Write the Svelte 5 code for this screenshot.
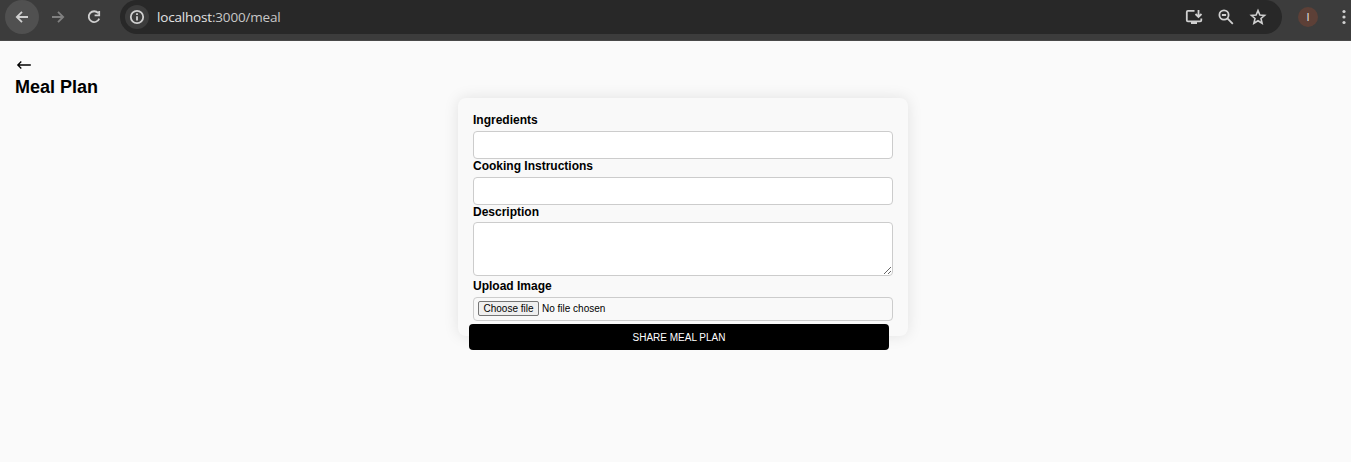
<script>
  let ingredients = $state('');
  let instructions = $state('');
  let description = $state('');
</script>

<div class="window">
  <header class="toolbar">
    <button class="nav active" aria-label="Back">
      <svg width="34" height="34" viewBox="0 0 34 34"><path d="M23 17H12M17 11.8L11.8 17L17 22.2" /></svg>
    </button>
    <button class="nav forward" aria-label="Forward">
      <svg width="34" height="34" viewBox="0 0 34 34"><path d="M11 17H22M17 11.8L22.2 17L17 22.2" /></svg>
    </button>
    <button class="nav reload" aria-label="Reload">
      <svg width="34" height="34" viewBox="0 0 34 34"><path d="M21.3 13.2A5.4 5.4 0 1 0 22.2 18.6M22.2 11V15.4H17.6" /></svg>
    </button>
    <div class="address">
      <span class="info">
        <svg width="24" height="24" viewBox="0 0 24 24"><circle cx="12" cy="12" r="6.2" /><path d="M12 11.3V15.6M12 8.2V10" /></svg>
      </span>
      <span class="url"><b>localhost</b>:3000/meal</span>
      <div class="actions">
        <svg width="20" height="20" viewBox="0 0 20 20"><path d="M10.5 3.8H3.9Q2.8 3.8 2.8 4.9V13.3Q2.8 14.4 3.9 14.4H16.2Q17.3 14.4 17.3 13.3V11.5M14.5 3V9.5M11.5 7L14.5 10L17.5 7" /><path class="solid" d="M7 14.5h6v2.5H7z" /></svg>
        <svg width="20" height="20" viewBox="0 0 20 20"><circle cx="8" cy="8" r="4.6" /><path d="M11.4 11.4L16.8 16.8M5.9 8H10.1" /></svg>
        <svg width="20" height="20" viewBox="0 0 20 20"><path class="star" d="M10 3.6L11.9 8L16.6 8.4L13 11.5L14.1 16.2L10 13.7L5.9 16.2L7 11.5L3.4 8.4L8.1 8Z" /></svg>
      </div>
    </div>
    <span class="avatar">I</span>
    <svg class="more" width="6" height="18" viewBox="0 0 6 18"><circle cx="3" cy="3.5" r="1.6" /><circle cx="3" cy="9" r="1.6" /><circle cx="3" cy="14.5" r="1.6" /></svg>
  </header>

  <main>
    <svg class="return" width="18" height="12" viewBox="0 0 18 12"><path d="M15.8 6H3M6.3 2.5L2.8 6L6.3 9.5" /></svg>
    <h1>Meal Plan</h1>
    <form onsubmit={(e) => e.preventDefault()}>
      <label for="ingredients">Ingredients</label>
      <input id="ingredients" bind:value={ingredients} />
      <label for="instructions">Cooking Instructions</label>
      <input id="instructions" bind:value={instructions} />
      <label class="tight" for="description">Description</label>
      <textarea id="description" bind:value={description}></textarea>
      <label class="upload" for="choose">Upload Image</label>
      <div class="file">
        <button type="button" id="choose">Choose file</button>
        <span>No file chosen</span>
      </div>
      <button class="submit">SHARE MEAL PLAN</button>
    </form>
  </main>
</div>

<style>
  :global(body) { margin: 0; background: #fafafa; }
  * { box-sizing: border-box; }
  .window { height: 462px; overflow: hidden; background: #fafafa; font-family: "Liberation Sans", Arial, sans-serif; color: #000; }
  button { font-family: inherit; padding: 0; border: 0; }
  svg { display: block; fill: none; stroke: #d0d0d0; stroke-width: 1.8; }
  .toolbar { display: flex; align-items: flex-start; height: 41px; background: #3c3c3c; border-bottom: 1px solid #484848; padding-left: 5px; }
  .nav { width: 34px; height: 34px; border-radius: 50%; background: none; margin-right: 2px; }
  .active { background: #505050; }
  .forward svg { stroke: #808080; }
  .reload { margin-right: 9px; }
  .address { display: flex; align-items: center; width: 1162px; height: 34px; border-radius: 17px; background: #282828; padding: 0 14px 0 5px; }
  .info { display: grid; place-items: center; width: 24px; height: 24px; border-radius: 50%; background: #3c3c3c; margin-right: 8px; }
  .url { font: 13.5px "Open Sans", "Segoe UI", sans-serif; color: #c7c7c7; letter-spacing: -0.18px; white-space: nowrap; padding-bottom: 1px; }
  .url b { font-weight: 400; color: #e3e3e3; }
  .actions { display: flex; gap: 12px; margin-left: auto; }
  .solid { fill: #d0d0d0; stroke: none; }
  .star { stroke-width: 1.6; }
  .avatar { display: grid; place-items: center; width: 20px; height: 20px; margin: 7px 0 0 16px; border-radius: 50%; background: #5d4037; color: #ddd; font-size: 11px; }
  .more { margin: 8px 0 0 23px; fill: #d0d0d0; stroke: none; flex: none; }
  main { display: flex; flex-direction: column; padding: 18px 0 0 15px; }
  .return { stroke: #000; stroke-width: 1.3; }
  h1 { margin: 5px 0 0; font-size: 18px; line-height: 22px; font-weight: 700; }
  form { display: flex; flex-direction: column; align-self: center; width: 450px; height: 238px; padding: 15px; border-radius: 8px; background: #f9f9f9; box-shadow: 0 0 15px rgba(0, 0, 0, 0.1); }
  label { height: 18px; flex: none; font-size: 12px; font-weight: 700; line-height: 14px; }
  .tight { height: 17px; }
  .upload { height: 21px; padding-top: 3px; }
  input, textarea { flex: none; display: block; width: 420px; margin: 0; border: 1px solid #ccc; border-radius: 4px; background: #fff; outline: 0; }
  input { height: 28px; }
  textarea { height: 54px; resize: vertical; }
  .file { display: flex; flex: none; align-items: center; gap: 3px; height: 24px; padding: 0 4px; border: 1px solid #ccc; border-radius: 4px; font-size: 10px; }
  .file button { width: 61px; height: 15px; margin-top: -1px; border: 1px solid #767676; border-radius: 2px; background: #efefef; color: #000; font-size: 10px; line-height: 13px; }
  .file span { margin-top: -1px; }
  .submit { flex: none; width: 420px; height: 26px; margin: 3px 0 0 -4px; border-radius: 4px; background: #000; color: #fff; font-size: 10px; }
</style>
